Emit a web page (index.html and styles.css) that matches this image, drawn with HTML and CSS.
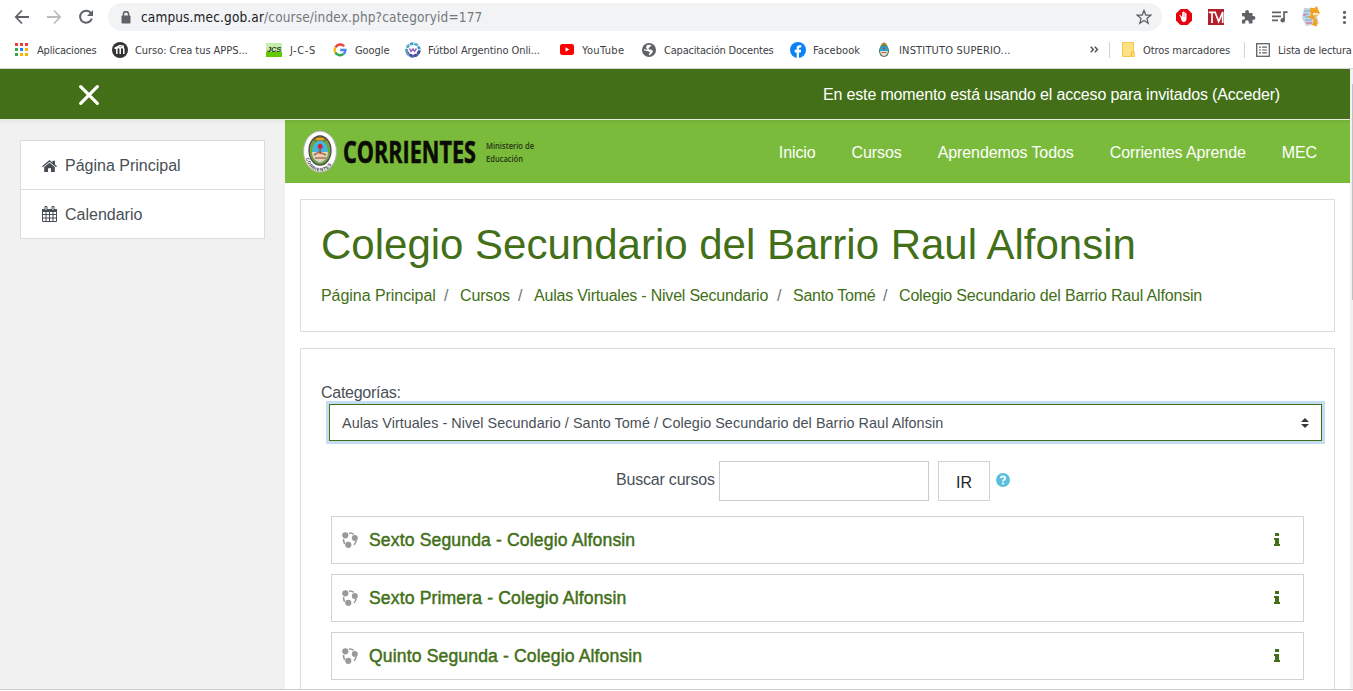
FILE: index.html
```
<!DOCTYPE html>
<html lang="es">
<head>
<meta charset="utf-8">
<title>Colegio Secundario del Barrio Raul Alfonsin</title>
<link rel="stylesheet" href="styles.css">
</head>
<body>
<svg class="defs" width="0" height="0">
  <defs>
    <symbol id="share" viewBox="0 0 16 16">
      <path d="M7 1.2Q10 .6 12 2.8M14.2 8.5Q13.8 11.5 11.5 13.3M1.5 7Q1.4 10.5 3.4 12.8" fill="none" stroke="#999" stroke-width="1.6" stroke-dasharray="5 1"/>
      <g fill="#999"><circle cx="3.3" cy="3.3" r="3.1"/><circle cx="12.8" cy="6" r="3"/><circle cx="6.3" cy="12.8" r="3.1"/></g>
    </symbol>
    <symbol id="info" viewBox="0 0 6 13">
      <path d="M1 0H5V3H1ZM0 5H5V11H6V13H0V11H1V7H0Z" fill="#426f17"/>
    </symbol>
  </defs>
</svg>
<div class="window">
  <div class="toolbar">
    <svg class="nav-icons" width="108" height="34" viewBox="0 0 108 34" fill="none" stroke-width="1.8">
      <path d="M29 17H16M22 10.5L15.8 17L22 23.5" stroke="#5f6368"/>
      <path d="M47 17H60M54 10.5L60.2 17L54 23.5" stroke="#babcbe"/>
      <path d="M91 13.2A6 6 0 1 0 91.8 18.6" stroke="#5f6368" stroke-width="2"/>
      <path d="M93 10V16H87Z" fill="#5f6368"/>
    </svg>
    <div class="address">
      <svg width="10" height="13" viewBox="0 0 10 13"><path d="M2.4 5V3.3a2.6 2.6 0 0 1 5.2 0V5" fill="none" stroke="#5f6368" stroke-width="1.5"/><rect x=".5" y="4.6" width="9" height="8" rx="1" fill="#5f6368"/></svg>
      <span class="url"><b>campus.mec.gob.ar</b>/course/index.php?categoryid=177</span>
      <svg class="star" width="16" height="16" viewBox="0 0 16 16"><path d="M8 1.4L9.8 6L14.7 6.2L10.9 9.4L12.2 14.2L8 11.5L3.8 14.2L5.1 9.4L1.3 6.2L6.2 6Z" fill="none" stroke="#5f6368" stroke-width="1.3"/></svg>
    </div>
    <svg class="extensions" width="191" height="34" viewBox="1162 0 191 34">
      <path d="M1180.7 9H1187.5L1192 13.5V20.5L1187.5 25H1180.5L1176 20.5V13.5Z" fill="#e60012"/>
      <path d="M1180.5 17L1179.6 15.6Q1179 15 1179.7 14.8L1182 16.8V12.6Q1182.5 12 1183 12.6V11.8Q1183.5 11.2 1184.1 11.8V12.4Q1184.7 11.8 1185.3 12.4V13.4Q1186 12.8 1186.5 13.5V19Q1186.3 22 1183.8 22Q1182.2 22 1181.5 20.5Z" fill="#fff"/>
      <path d="M1183 13V17M1184.5 13V17" stroke="#e60012" stroke-width=".3"/>
      <rect x="1208" y="9" width="16" height="16" fill="#b3202a"/>
      <path d="M1208.8 12.3H1216M1212 12V23M1215 12L1218.7 21.5L1222.7 12V23" fill="none" stroke="#fff" stroke-width="1.7"/>
      <path d="M1242 13H1245.2V12A1.9 1.9 0 0 1 1249 12V13H1252.5V16H1253.5A1.9 1.9 0 0 1 1253.5 19.8H1252.5V23.5H1248.8V22A1.8 1.8 0 0 0 1245.2 22V23.5H1242V19.8H1243.2A1.8 1.8 0 0 0 1243.2 16.2H1242Z" fill="#5f6368"/>
      <path d="M1272 12.3H1281M1272 16.3H1281M1272 20.3H1278M1284 20V12.2H1287.6" fill="none" stroke="#5f6368" stroke-width="1.7"/>
      <circle cx="1282.7" cy="20.2" r="2.2" fill="#5f6368"/>
      <path d="M1304 8H1315L1319 24L1306 26L1302 18Z" fill="#cbd5dc"/>
      <path d="M1304 11H1310M1304 14H1309M1305 17H1310M1305 20H1312" stroke="#6da9d8" stroke-width="1.2"/>
      <path d="M1303 15H1306M1306 23H1312" stroke="#d17fae" stroke-width="1.6"/>
      <path d="M1310 10L1311 7.5L1314 8.5L1317 6L1318 9.5L1320 13L1317 16L1314 17L1317 20L1317 26.5L1312 25L1314 20L1308 17L1311 15Z" fill="#f4a11c"/>
      <path d="M1313 13H1319L1317 15.3H1313Z" fill="#fff0cf"/>
      <g fill="#5f6368"><circle cx="1344.5" cy="12.4" r="1.6"/><circle cx="1344.5" cy="17.4" r="1.6"/><circle cx="1344.5" cy="22.5" r="1.6"/></g>
    </svg>
  </div>
  <div class="bookmarks">
    <div class="bm bm-apps"><svg width="13" height="13" viewBox="0 0 13 13"><path d="M0 0h3v3H0zM5 0h3v3H5zM10 0h3v3h-3z" fill="#ea4335"/><path d="M0 5h3v3H0zM0 10h3v3H0z" fill="#34a853"/><path d="M5 5h3v3H5z" fill="#1a83f5"/><path d="M10 5h3v3h-3zM5 10h3v3H5zM10 10h3v3h-3z" fill="#f4b400"/></svg><span>Aplicaciones</span></div>
    <div class="bm bm-curso"><svg width="16" height="16" viewBox="0 0 16 16"><circle cx="8" cy="8" r="8" fill="#333"/><path d="M4.8 12V7Q4.8 5.5 6.4 5.5T8.2 7V12M8.2 7Q8.2 5.5 9.9 5.5T11.8 7V12M2.5 6.5L8 3.5L12 4.5" fill="none" stroke="#fff" stroke-width="1.5"/></svg><span>Curso: Crea tus APPS...</span></div>
    <div class="bm bm-jcs"><svg width="16" height="14" viewBox="0 0 16 14"><rect width="16" height="14" fill="#c5edab"/><rect y="9" width="16" height="5" fill="#61c900"/><text x="1" y="8.8" class="jcs">JCS</text></svg><span>J-C-S</span></div>
    <div class="bm bm-google"><svg width="14" height="14" viewBox="0 0 14 14" fill="none" stroke-width="2.4"><path d="M11.2 3.3A5.3 5.3 0 0 0 2.4 4.5" stroke="#ea4335"/><path d="M2.4 4.5A5.3 5.3 0 0 0 2.4 9.6" stroke="#fbbc05"/><path d="M2.4 9.6A5.3 5.3 0 0 0 10.6 10.9" stroke="#34a853"/><path d="M10.6 10.9Q12.4 9.3 12.4 7H7.2" stroke="#4285f4"/></svg><span>Google</span></div>
    <div class="bm bm-futbol"><svg width="16" height="16" viewBox="0 0 16 16" fill="none"><circle cx="8" cy="8" r="6.4" stroke="#3e9bc5" stroke-width="2.6" stroke-dasharray="3.4 1"/><path d="M14.2 9A6.5 6.5 0 0 1 2 10" stroke="#51479c" stroke-width="2.8" stroke-dasharray="3.4 1"/><path d="M1.8 4L5 3M10 1L13 4M1.5 10L4 14" stroke="#82c8dd"/><path d="M4.5 6.5L6 9.3L8 7L9.5 9.3L11.5 6.5" stroke="#8d59b7" stroke-width="1.4"/></svg><span>Fútbol Argentino Onli...</span></div>
    <div class="bm bm-youtube"><svg width="14" height="11" viewBox="0 0 14 11"><rect width="14" height="11" rx="2.3" fill="#f00"/><path d="M5.5 3.3L9.3 5.5L5.5 7.7Z" fill="#fff"/></svg><span>YouTube</span></div>
    <div class="bm bm-cap"><svg width="14" height="14" viewBox="0 0 14 14"><circle cx="7" cy="7" r="7" fill="#5f6368"/><path d="M5 2Q8 1.2 9.5 2.5L7.3 4.5Q6 5 6.8 6.2L9.5 6.8Q12 8.3 9.5 10.7L7 12.6V10.4L8.3 9.3L6.6 8.6L2 7.3V6L5.5 7L4 4.5Z" fill="#fff"/></svg><span>Capacitación Docentes</span></div>
    <div class="bm bm-face"><svg width="16" height="16" viewBox="0 0 16 16"><circle cx="8" cy="8" r="8" fill="#0c83f4"/><path d="M6.7 16V10.4H4.7V7.8H6.7V6Q6.7 3.2 9.5 3.2H11.3V5.5H10Q9 5.5 9 6.5V7.8H11.2L10.8 10.4H9V16Z" fill="#fff"/></svg><span>Facebook</span></div>
    <div class="bm bm-inst"><svg width="12" height="16" viewBox="0 0 12 16"><path d="M2.5 4L4 1.5L6 .3L8 1.5L9.5 4V7H2.5Z" fill="#a8862f"/><ellipse cx="6" cy="9" rx="5" ry="6" fill="#3f744b"/><path d="M2 9V6Q3 3.7 6 3.7T10 6V9Z" fill="#22a5d2"/><path d="M2 9H10Q9.6 13.4 6 14.2Q2.4 13.4 2 9Z" fill="#ead9d0"/><path d="M5 5.5h2v2H5z" fill="#d2362f"/><path d="M3.5 10.5H8.5" stroke="#b76c54"/></svg><span>INSTITUTO SUPERIO...</span></div>
    <div class="bm-more"><svg width="9" height="7" viewBox="0 0 9 7"><path d="M.7.7L3.4 3.5L.7 6.3M4.8.7L7.5 3.5L4.8 6.3" fill="none" stroke="#4b4f54" stroke-width="1.4"/></svg></div>
    <div class="bm bm-otros"><svg width="13" height="15" viewBox="0 0 13 15"><path d="M.5.5H11.5V10H12.5V14.5H.5Z" fill="#ffe082" stroke="#f2ca4c"/><path d="M9.5 14V10H12" fill="none" stroke="#e9bd39"/></svg><span>Otros marcadores</span></div>
    <div class="bm bm-lista"><svg width="14" height="14" viewBox="0 0 14 14"><rect x=".7" y=".7" width="12.6" height="12.6" fill="none" stroke="#5f6368" stroke-width="1.3"/><path d="M3 4.2H5M6 4.2H11M3 7H5M6 7H11M3 9.8H5M6 9.8H11" stroke="#5f6368" stroke-width="1.2"/></svg><span>Lista de lectura</span></div>
  </div>
  <div class="viewport">
    <div class="page">
      <header class="topbar">
        <svg width="20" height="20" viewBox="0 0 20 20"><path d="M1.7 1.7L18.3 18.3M18.3 1.7L1.7 18.3" stroke="#fff" stroke-width="3.2" stroke-linecap="round"/></svg>
        <span class="guest">En este momento está usando el acceso para invitados (Acceder)</span>
      </header>
      <div class="columns">
        <aside class="sidebar">
          <nav class="menu">
            <a class="menu-item"><svg width="15" height="12" viewBox="0 0 15 12"><path d="M0 6.3L7.5 0L10.5 2.5V.7H13V4.5L15 6.3L14.2 7.2L7.5 1.7L.8 7.2Z" fill="#454c55"/><path d="M2.2 7.1L7.5 2.7L12.8 7.1V12H9V8.3H6V12H2.2Z" fill="#454c55"/></svg><span>Página Principal</span></a>
            <a class="menu-item"><svg width="15" height="16" viewBox="0 0 15 16"><path d="M.5 3.5H14.5V15.5H.5ZM0 5H15M4 5.5V15M7.5 5.5V15M11 5.5V15M.5 8.5H14.5M.5 12H14.5" fill="none" stroke="#454c55"/><path d="M0 3H15V6H0Z" fill="#454c55"/><path d="M3 .5H5V4.5H3ZM10 .5H12V4.5H10Z" fill="#fff" stroke="#454c55"/></svg><span>Calendario</span></a>
          </nav>
        </aside>
        <div class="main">
          <div class="brandbar">
            <svg class="brand" width="250" height="46" viewBox="303 130 250 46">
              <ellipse cx="320" cy="151.6" rx="16.5" ry="20.5" fill="#fff" stroke="#b0b0b0"/>
              <ellipse cx="320" cy="150.5" rx="11" ry="14.5" fill="#74a33a" stroke="#4b4b4b" stroke-width="1.3"/>
              <path d="M315 141Q314 137 320 137T325 141Z" fill="#dca528" stroke="#6c5518"/>
              <ellipse cx="320" cy="151.5" rx="8" ry="11" fill="#40b7df"/>
              <path d="M312 152H328Q328 160 320 162.5Q312 160 312 152Z" fill="#e8d1b9"/>
              <path d="M314 155L319 152L326 155M315 158H326" stroke="#a77254" stroke-width="1.5" fill="none"/>
              <path d="M318 145L320 143.5L322.5 145V148.5H320.7V154H319.5V148.5H317.7Z" fill="#ca2638"/>
              <path id="ring" d="M305.5 157Q309 171.2 320 171.2T334.5 157" fill="none"/>
              <text class="ring-text" textLength="35"><textPath href="#ring" startOffset="1">CORRIENTES</textPath></text>
              <text x="343" y="162.8" class="brand-name" textLength="133" lengthAdjust="spacingAndGlyphs">CORRIENTES</text>
              <text x="486" y="149" class="brand-sub" textLength="48" lengthAdjust="spacingAndGlyphs">Ministerio de</text>
              <text x="486" y="161.8" class="brand-sub" textLength="37" lengthAdjust="spacingAndGlyphs">Educación</text>
            </svg>
            <nav class="links"><a>Inicio</a><a>Cursos</a><a>Aprendemos Todos</a><a>Corrientes Aprende</a><a>MEC</a></nav>
          </div>
          <div class="content">
            <section class="card title-card">
              <h1>Colegio Secundario del Barrio Raul Alfonsin</h1>
              <div class="crumbs"><a class="c1">Página Principal</a><i>/</i><a class="c2">Cursos</a><i>/</i><a class="c3">Aulas Virtuales - Nivel Secundario</a><i>/</i><a class="c4">Santo Tomé</a><i>/</i><a class="c5">Colegio Secundario del Barrio Raul Alfonsin</a></div>
            </section>
            <section class="card list-card">
              <div class="label">Categorías:</div>
              <div class="select"><span>Aulas Virtuales - Nivel Secundario / Santo Tomé / Colegio Secundario del Barrio Raul Alfonsin</span><svg width="8" height="10" viewBox="0 0 8 10"><path d="M4 0L8 4H0ZM0 6H8L4 10Z" fill="#343a40"/></svg></div>
              <div class="search"><span>Buscar cursos</span><input type="text" aria-label="Buscar cursos"><button>IR</button><svg class="help" width="14" height="14" viewBox="0 0 14 14"><circle cx="7" cy="7" r="7" fill="#5bc0de"/><path d="M4.8 5.1Q5 3.4 7 3.4T9.1 5.2Q9.1 6.2 8 6.8T7.1 8.3M7.1 9.5V11.3" fill="none" stroke="#fff" stroke-width="1.9"/></svg></div>
              <div class="courses">
                <div class="course"><svg width="16" height="16"><use href="#share"/></svg><a>Sexto Segunda - Colegio Alfonsin</a><svg class="info" width="6" height="13"><use href="#info"/></svg></div>
                <div class="course"><svg width="16" height="16"><use href="#share"/></svg><a>Sexto Primera - Colegio Alfonsin</a><svg class="info" width="6" height="13"><use href="#info"/></svg></div>
                <div class="course"><svg width="16" height="16"><use href="#share"/></svg><a>Quinto Segunda - Colegio Alfonsin</a><svg class="info" width="6" height="13"><use href="#info"/></svg></div>
              </div>
            </section>
          </div>
        </div>
      </div>
    </div>
    <div class="scrollbar"><div class="thumb"></div></div>
  </div>
  <div class="bottom-edge"></div>
</div>
</body>
</html>
```
FILE: styles.css
```
* { box-sizing: border-box; }
body { margin: 0; overflow: hidden; background: #fff; font-family: "Liberation Sans", Arial, sans-serif; font-size: 16px; color: #495057; }
svg { display: block; flex: none; }
.defs { position: absolute; }
.window { width: 1353px; height: 691px; display: flex; flex-direction: column; overflow: hidden; white-space: nowrap; }

.toolbar { height: 34px; flex: none; display: flex; }
.address { width: 1054px; height: 28px; margin-top: 3px; border-radius: 14px; background: #f1f3f4; display: flex; align-items: center; padding: 0 10px 0 13px; }
.url { margin-left: 10px; font: 13.5px "DejaVu Sans Condensed", "DejaVu Sans", sans-serif; font-stretch: condensed; letter-spacing: 0.15px; color: #74787c; }
.url b { font-weight: 400; color: #202124; }
.star { margin-left: auto; }

.bookmarks { height: 35px; flex: none; display: flex; align-items: center; padding: 0 0 3px 15px; border-bottom: 1px solid #d5d6d8; font: 11px "DejaVu Sans Condensed", "DejaVu Sans", sans-serif; font-stretch: condensed; letter-spacing: -0.08px; color: #3c4043; }
.bm { display: flex; align-items: center; flex: none; height: 16px; }
.bm span { margin: 1px 0 0 8px; }
.bm-apps { width: 97px; letter-spacing: -0.2px; } .bm-apps span { margin-left: 9px; }
.bm-curso { width: 154px; letter-spacing: -0.05px; } .bm-curso span { margin-left: 7px; }
.bm-jcs { width: 67px; letter-spacing: 0.6px; }
.bm-google { width: 72px; }
.bm-futbol { width: 155px; } .bm-futbol span { margin-left: 7px; }
.bm-youtube { width: 82px; letter-spacing: 0.35px; }
.bm-cap { width: 148px; letter-spacing: -0.2px; }
.bm-face { width: 88px; letter-spacing: 0.1px; } .bm-face span { margin-left: 7px; }
.bm-inst { width: 212px; letter-spacing: 0.17px; } .bm-inst span { margin-left: 9px; }
.bm-more { width: 19px; }
.bm-otros { border-left: 1px solid #d0d3d6; width: 135px; padding-left: 12px; }
.bm-lista { border-left: 1px solid #d0d3d6; padding-left: 11px; letter-spacing: -0.18px; }
.jcs { font: italic 700 7.5px "Liberation Sans", sans-serif; fill: #24351b; letter-spacing: -0.2px; }

.viewport { height: 620px; flex: none; display: flex; }
.page { width: 1350px; display: flex; flex-direction: column; overflow: hidden; }
.topbar { height: 51px; flex: none; background: #426f17; border-bottom: 1px solid #e8efe1; display: flex; align-items: center; justify-content: space-between; padding: 2px 70px 0 79px; color: #fff; }
.guest { letter-spacing: -0.16px; }
.columns { display: flex; flex: 1; min-height: 0; }
.sidebar { width: 285px; flex: none; background: linear-gradient(#e7e7e7, #f1f1f1 4px); padding: 20px; }
.menu { border: 1px solid #dcdcdc; background: #fff; }
.menu-item { height: 48px; display: flex; align-items: center; padding: 2px 21px 0; }
.menu-item + .menu-item { height: 49px; border-top: 1px solid #dcdcdc; }
.menu-item + .menu-item svg { margin-top: -2px; }
.menu-item svg { margin-top: -1px; }
.menu-item span { margin-left: 8px; }

.main { width: 1065px; display: flex; flex-direction: column; }
.brandbar { height: 63px; flex: none; background: linear-gradient(#73ae38, #7bbb3c 4px); display: flex; align-items: center; padding-left: 18px; }
.brand { margin-top: 3px; }
.brand-name { font: 700 30px "Open Sans", sans-serif; fill: #0b0b05; stroke: #0b0b05; stroke-width: 0.6px; }
.brand-sub { font: 600 9px "Open Sans", sans-serif; fill: #253613; }
.ring-text { font: 700 4.5px "Liberation Sans", sans-serif; fill: #333; }
.links { margin-left: auto; display: flex; gap: 36px; padding: 2px 33px 0 0; color: #fff; letter-spacing: -0.1px; }

.content { padding: 16px 15px 0; display: flex; flex-direction: column; gap: 16px; }
.card { border: 1px solid #dcdcdc; padding: 20px; }
.title-card { height: 133px; }
h1 { margin: 0; font-size: 42px; font-weight: 400; line-height: 50px; color: #426f17; }
.crumbs { margin-top: 16px; line-height: 20px; display: flex; color: #426f17; }
.crumbs i { font-style: normal; color: #6c757d; width: 24px; padding-left: 8px; }
.c1 { width: 115px; letter-spacing: -0.05px; }
.c2 { width: 50px; letter-spacing: -0.15px; }
.c3 { width: 235px; letter-spacing: -0.22px; }
.c4 { width: 82px; letter-spacing: -0.28px; }
.c5 { letter-spacing: -0.17px; }
.list-card { height: 420px; padding: 34px 12px 0 20px; }
.label { line-height: 20px; letter-spacing: -0.27px; }
.select { height: 37px; margin: 1px 0 0 8px; border: 1px solid #426f17; box-shadow: 0 0 0 3px #c5dcf3; display: flex; align-items: center; justify-content: space-between; padding: 0 12px; font-size: 14.4px; letter-spacing: 0.045px; }
.search { height: 40px; margin: 20px 0 0 295px; display: flex; align-items: center; }
.search span { width: 103px; margin-top: -3px; letter-spacing: -0.2px; }
.search input { width: 210px; height: 40px; border: 1px solid #ccc; background: #fff; padding: 0; }
.search button { width: 52px; height: 40px; margin: 0 6px 0 9px; border: 1px solid #ced4da; background: #fff; color: #212529; font: 16px "Liberation Sans", Arial, sans-serif; padding: 3px 0 0; }
.help { margin-top: -2px; }
.courses { margin: 15px 18px 0 10px; display: flex; flex-direction: column; gap: 10px; }
.course { height: 48px; border: 1px solid #d2d2d2; display: flex; align-items: center; padding: 0 23px 0 10px; color: #426f17; font-size: 17.6px; letter-spacing: 0.13px; -webkit-text-stroke: 0.45px #426f17; }
.course a { margin-left: 11px; }
.info { margin: -2px 0 0 auto; }

.scrollbar { width: 3px; background: #f1f1f1; padding: 15px 0 0 2px; }
.thumb { height: 216px; background: #c1c1c1; }
.bottom-edge { height: 1px; background: #cfcfc6; }
```
